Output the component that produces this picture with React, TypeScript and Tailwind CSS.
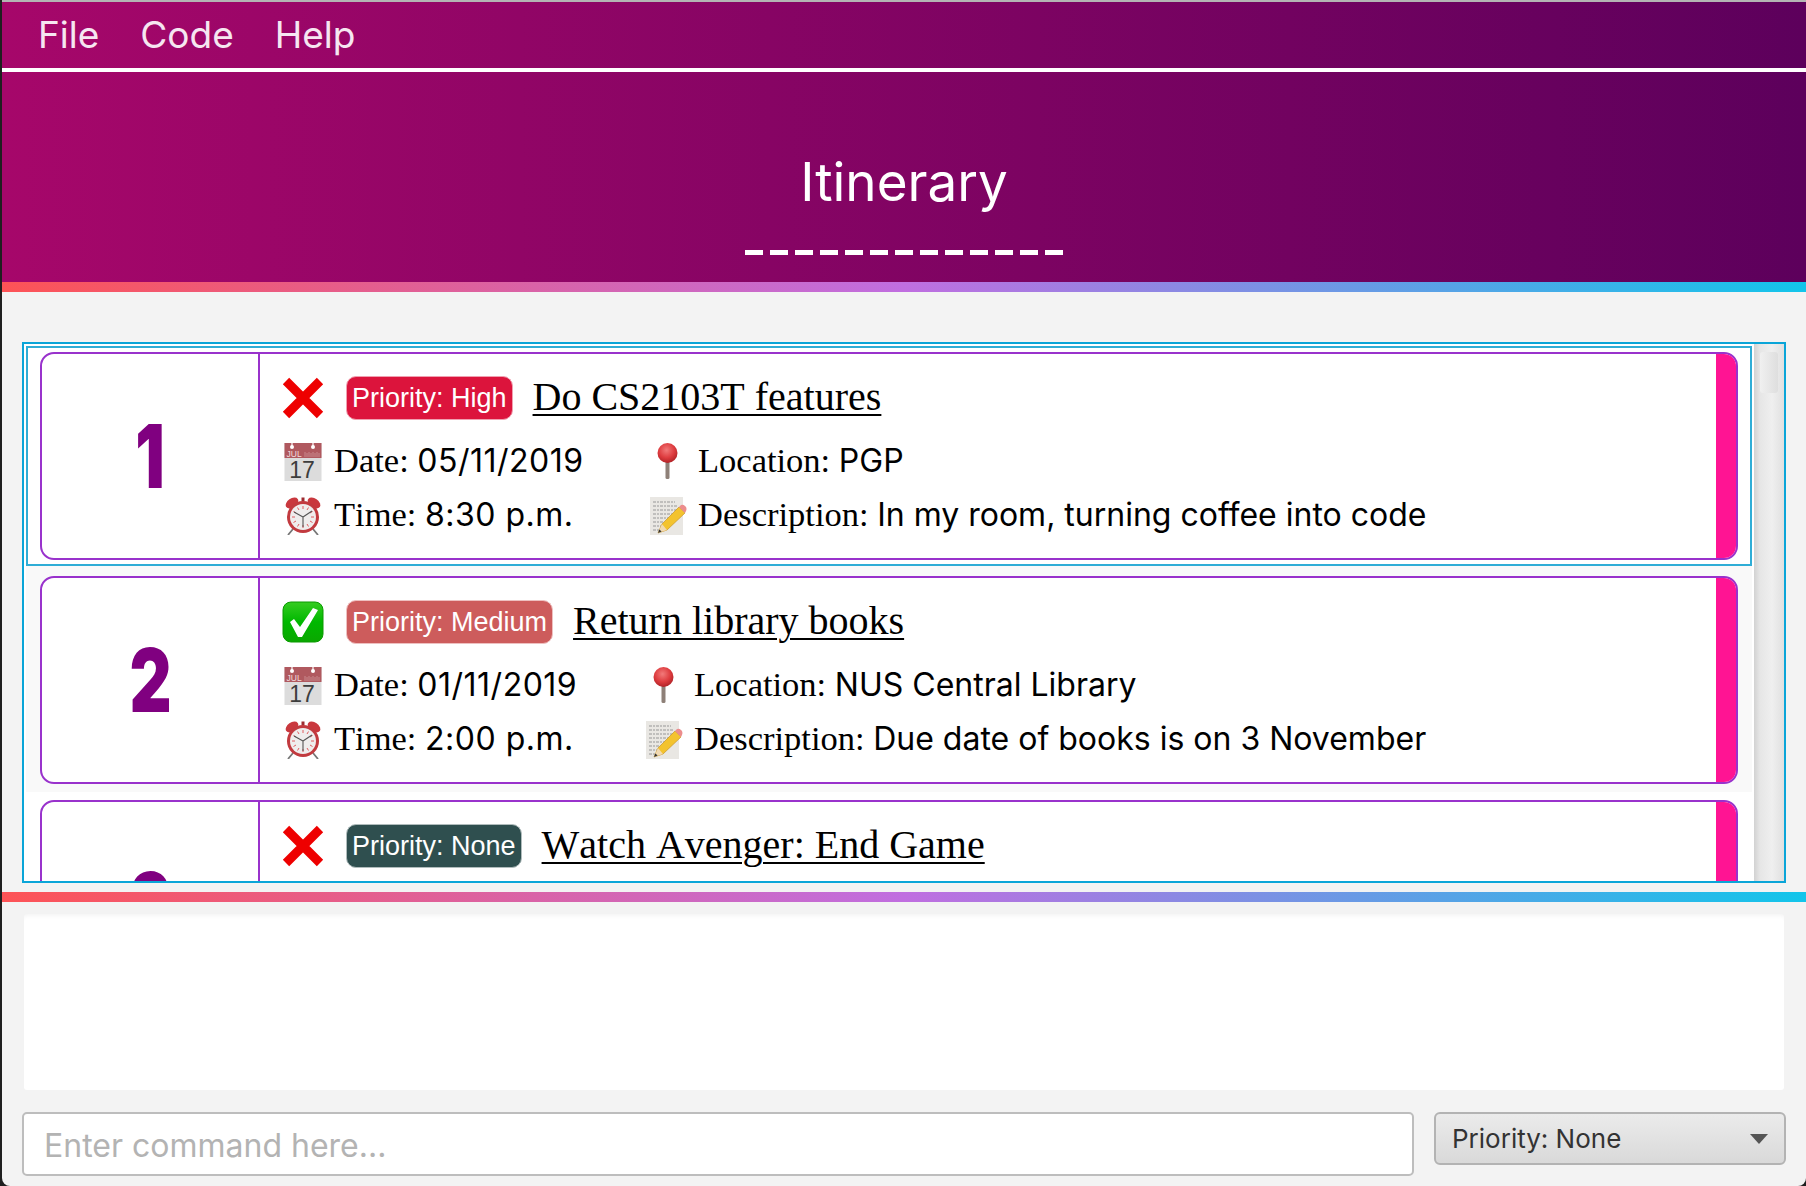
function CrossIcon() {
  return (
    <svg width="42" height="42" viewBox="0 0 42 42" className="shrink-0">
      <path d="M4 4 L38 38 M38 4 L4 38" stroke="#ee0000" strokeWidth="9" />
    </svg>
  );
}

function CheckIcon() {
  return (
    <svg width="42" height="42" viewBox="0 0 42 42" className="shrink-0">
      <defs>
        <linearGradient id="chk" x1="0" y1="0" x2="0" y2="1">
          <stop offset="0" stopColor="#35cc20" />
          <stop offset="0.5" stopColor="#00b800" />
          <stop offset="1" stopColor="#0aa700" />
        </linearGradient>
      </defs>
      <rect x="1" y="1" width="40" height="40" rx="8" fill="url(#chk)" stroke="#0a9a00" strokeWidth="1" />
      <path d="M8 21 L12 18 L18 26 L31 7 L36 9 L20 36 L16 36 Z" fill="#ffffff" />
    </svg>
  );
}

function CalendarIcon() {
  return (
    <svg width="38" height="38" viewBox="0 0 38 38" className="shrink-0">
      <rect x="0.5" y="0" width="37" height="38" fill="#dcdcdc" />
      <rect x="0.5" y="0" width="37" height="15" fill="#b0595f" />
      <path d="M8 0v4M29 0v4" stroke="#ffffff" strokeWidth="1.2" />
      <circle cx="8" cy="4" r="2" fill="#ffffff" />
      <circle cx="29" cy="4" r="2" fill="#ffffff" />
      <text x="2.5" y="13.5" fontSize="8.5" fill="#f3dcdc" fontFamily="Liberation Sans">JUL</text>
      <path d="M21 14V9M23 14V10M25 14V9M27 14V10M29 14V9M31 14V10M33 14V9M35 14V10" stroke="#c98a8e" strokeWidth="1" />
      <text x="18" y="34.5" fontSize="23" fill="#3d3d3d" textAnchor="middle" fontFamily="Liberation Sans">17</text>
    </svg>
  );
}

function ClockIcon() {
  return (
    <svg width="38" height="38" viewBox="0 0 38 38" className="shrink-0">
      <path d="M9 32 L4 38 M29 32 L34 38" stroke="#777777" strokeWidth="1.8" />
      <ellipse cx="8" cy="6" rx="7" ry="4.5" fill="#c9383e" transform="rotate(-35 8 6)" />
      <ellipse cx="30" cy="6" rx="7" ry="4.5" fill="#c9383e" transform="rotate(35 30 6)" />
      <rect x="17.5" y="0.5" width="3" height="4" fill="#9d2c31" />
      <circle cx="19" cy="20" r="16" fill="#c23a3f" />
      <circle cx="19" cy="20" r="13" fill="#efeded" />
      <path d="M19 9v3M19 28v3M8 20h3M27 20h3M13.5 10.5l1.5 2.5M24.5 10.5l-1.5 2.5M9.5 14.5l2.5 1.5M28.5 14.5l-2.5 1.5M9.5 25.5l2.5-1.5M28.5 25.5l-2.5-1.5M13.5 29.5l1.5-2.5M24.5 29.5l-1.5-2.5" stroke="#de5c60" strokeWidth="1" />
      <path d="M19 20 L10 15 M19 20 L28 14 M19 20 V30" stroke="#555555" strokeWidth="1.1" />
    </svg>
  );
}

function PinIcon() {
  return (
    <svg width="40" height="36" viewBox="0 0 40 36" className="mb-[2px] shrink-0">
      <defs>
        <radialGradient id="pinball" cx="0.45" cy="0.35" r="0.65">
          <stop offset="0" stopColor="#f27a7a" />
          <stop offset="0.6" stopColor="#de3c3f" />
          <stop offset="1" stopColor="#b12327" />
        </radialGradient>
      </defs>
      <rect x="17.5" y="15" width="4" height="21" rx="1.5" fill="#8e8078" />
      <circle cx="19.5" cy="10" r="10" fill="url(#pinball)" />
    </svg>
  );
}

function MemoIcon() {
  return (
    <svg width="40" height="38" viewBox="0 0 40 38" className="shrink-0">
      <rect x="2" y="0" width="33" height="38" fill="#e9e7e3" />
      <path d="M5 5h22M5 9h24M5 13h25M5 17h22M5 21h16M5 25h11M5 29h8M5 33h6" stroke="#777777" strokeWidth="0.7" strokeDasharray="3 1 2 1" />
      <path d="M10 36 L14 27 L31 10 L37 16 L19 33 Z" fill="#f3c32f" stroke="#c9962a" strokeWidth="0.7" />
      <path d="M31 10 L33 8 Q35 7 37 9 L38 10 Q39 12 38 14 L37 16 Z" fill="#ec8d8d" />
      <path d="M10 36 L14 27 L19 33 Z" fill="#f1d9b2" />
      <path d="M10 36 L11.3 32.5 L13.7 34.5 Z" fill="#333333" />
    </svg>
  );
}

type Task = {
  num: string;
  status: "cross" | "check";
  priority: string;
  badge: string;
  badgeRing: string;
  title: string;
  date?: string;
  time?: string;
  location?: string;
  description?: string;
  gapClass: string;
  rowClass: string;
};

const tasks: Task[] = [
  {
    num: "1",
    status: "cross",
    priority: "Priority: High",
    badge: "bg-[#dc143c]",
    badgeRing: "border-[#f0a0b0]",
    title: "Do CS2103T features",
    date: "05/11/2019",
    time: "8:30 p.m.",
    location: "PGP",
    description: "In my room, turning coffee into code",
    gapClass: "w-[314px]",
    rowClass: "h-[220px] bg-white pt-[4px] border-2 border-[#2fadd6]",
  },
  {
    num: "2",
    status: "check",
    priority: "Priority: Medium",
    badge: "bg-[#cd5c5c]",
    badgeRing: "border-[#eec0c0]",
    title: "Return library books",
    date: "01/11/2019",
    time: "2:00 p.m.",
    location: "NUS Central Library",
    description: "Due date of books is on 3 November",
    gapClass: "w-[310px]",
    rowClass: "h-[226px] bg-[#f9f9f9] pt-[8px] border-2 border-transparent",
  },
  {
    num: "3",
    status: "cross",
    priority: "Priority: None",
    badge: "bg-[#2f4f4f]",
    badgeRing: "border-[#b0bcbc]",
    title: "Watch Avenger: End Game",
    gapClass: "w-[314px]",
    rowClass: "h-[224px] bg-white pt-[6px] border-2 border-transparent",
  },
];

function Field({ label, value, wide }: { label: string; value: string; wide?: boolean }) {
  return (
    <div className="mb-[3px] leading-none whitespace-nowrap text-black">
      <span className="font-['Liberation_Serif',serif] text-[34.5px] [font-kerning:none]">{label} </span>
      <span className={`font-['Inter',sans-serif] text-[32px] ${wide ? "tracking-[0.5px]" : ""}`}>{value}</span>
    </div>
  );
}

function TaskCard({ task }: { task: Task }) {
  return (
    <div className={`${task.rowClass} shrink-0 pl-[12px] pr-[12px]`}>
      <div className="flex h-[208px] overflow-hidden rounded-[14px] border-2 border-[#9932cc] bg-white">
        <div className="flex w-[218px] shrink-0 items-center justify-center border-r-2 border-[#9932cc]">
          <span className="scale-x-[0.74] font-['Inter',sans-serif] text-[88px] leading-none font-black text-[#800080]">
            {task.num}
          </span>
        </div>
        <div className="flex min-w-0 flex-1 flex-col pl-[22px] pt-[22px]">
          <div className="flex h-[44px] items-center">
            {task.status === "cross" ? <CrossIcon /> : <CheckIcon />}
            <span
              className={`${task.badge} ${task.badgeRing} ml-[22px] rounded-[10px] border px-[5px] font-['Liberation_Sans',sans-serif] text-[27px] leading-[42px] text-white`}
            >
              {task.priority}
            </span>
            <span className="mb-[2px] ml-[20px] font-['Liberation_Serif',serif] text-[40px] leading-none text-black underline decoration-2 underline-offset-4 [font-kerning:none]">
              {task.title}
            </span>
          </div>
          {task.date && task.time && task.location && task.description && (
            <div className="mt-[20px] flex flex-col gap-[10px] pl-[2px]">
              <div className="flex h-[44px] items-center">
                <CalendarIcon />
                <div className={`${task.gapClass} ml-[12px] shrink-0`}>
                  <Field label="Date:" value={task.date} wide />
                </div>
                <PinIcon />
                <div className="ml-[10px]">
                  <Field label="Location:" value={task.location} />
                </div>
              </div>
              <div className="flex h-[44px] items-center">
                <ClockIcon />
                <div className={`${task.gapClass} ml-[12px] shrink-0`}>
                  <Field label="Time:" value={task.time} wide />
                </div>
                <MemoIcon />
                <div className="ml-[10px]">
                  <Field label="Description:" value={task.description} />
                </div>
              </div>
            </div>
          )}
        </div>
        <div className="w-[20px] shrink-0 bg-[#ff1493]" />
      </div>
    </div>
  );
}

export default function App() {
  return (
    <div className="h-[1186px] w-[1806px] overflow-hidden bg-[#1f1f1f] pl-[2px]">
      <div className="flex h-full flex-col overflow-hidden rounded-b-[8px] bg-[#f3f3f3] font-['Inter',sans-serif]">
        <div className="h-[2px] shrink-0 bg-[#b4b4b4]" />
        <div className="shrink-0 bg-[linear-gradient(to_right,#a6076a,#5d005c)]">
          <nav className="flex h-[66px] items-center pl-[36px] text-[37px] text-[#f6e6f1]">
            <span className="mr-[41px]">File</span>
            <span className="mr-[41px]">Code</span>
            <span>Help</span>
          </nav>
          <div className="h-[4px] bg-white" />
          <header className="flex h-[210px] flex-col items-center pt-[72px] text-white">
            <h1 className="text-[53px] leading-[76px] font-normal">Itinerary</h1>
            <div className="mt-[30px] flex gap-[7px]">
              {Array.from({ length: 13 }).map((_, i) => (
                <span key={i} className="h-[5px] w-[18px] bg-white" />
              ))}
            </div>
          </header>
        </div>
        <div className="h-[10px] shrink-0 bg-[linear-gradient(to_right,#fd5356,#c06ee0,#12c5ea)]" />

        <section className="mx-[20px] mt-[50px] flex h-[541px] shrink-0 overflow-hidden border-2 border-[#0aa5d8] bg-white pl-[2px]">
          <div className="flex min-w-0 flex-1 flex-col pt-[2px]">
            {tasks.map((t) => (
              <TaskCard key={t.num} task={t} />
            ))}
          </div>
          <div className="ml-[2px] w-[30px] shrink-0 bg-[linear-gradient(to_right,#d2d2d2,#e6e6e6_20%,#efefef_60%,#e0e0e0)] px-[6px] pt-[8px]">
            <div className="h-[41px] rounded-[3px] bg-[linear-gradient(to_right,#f0f0f0,#dedede)]" />
          </div>
        </section>

        <div className="mt-[9px] h-[10px] shrink-0 bg-[linear-gradient(to_right,#fd5356,#c06ee0,#12c5ea)]" />

        <div className="mx-[22px] mt-[12px] h-[176px] shrink-0 rounded-[3px] bg-white shadow-[inset_0_5px_5px_-4px_rgba(0,0,0,0.06)]" />

        <div className="mt-[22px] flex items-start gap-[20px] pl-[20px] pr-[20px]">
          <input
            readOnly
            placeholder="Enter command here..."
            className="h-[64px] w-[1392px] shrink-0 rounded-[5px] border-2 border-[#bdbdbd] bg-white px-[20px] pt-[3px] text-[32px] outline-none placeholder:text-[#b3b3b3]"
          />
          <button
            type="button"
            className="flex h-[53px] flex-1 items-center justify-between rounded-[6px] border-2 border-[#b3b3b3] bg-[linear-gradient(to_bottom,#ebebeb,#d9d9d9)] pl-[16px] pr-[16px] text-[26px] text-[#333333]"
          >
            <span>Priority: None</span>
            <svg width="18" height="10" viewBox="0 0 18 10">
              <path d="M0 0 H18 L9 10 Z" fill="#555555" />
            </svg>
          </button>
        </div>
      </div>
    </div>
  );
}
